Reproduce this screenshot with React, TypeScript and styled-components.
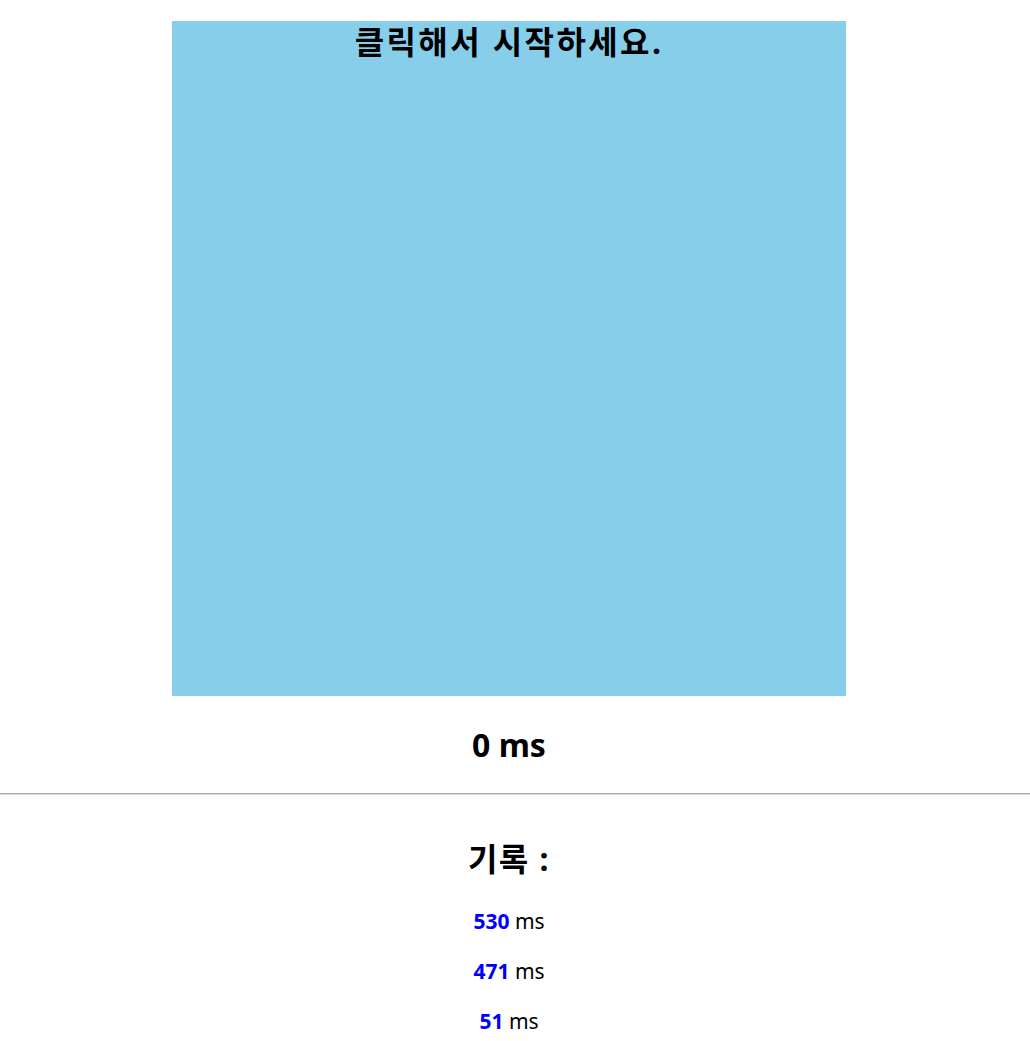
import React from "react";
import styled, { createGlobalStyle } from "styled-components";

const Global = createGlobalStyle`
  html, body { margin: 0; padding: 0; background: #fff; }
  body { font-family: "Noto Sans", "Noto Sans CJK KR", sans-serif; color: #000; }
`;

const Page = styled.div`
  width: 1018px;
  display: flex;
  flex-direction: column;
  align-items: center;
  padding-top: 21px;
`;

const Screen = styled.div`
  width: 674px;
  height: 675px;
  background: #87ceeb;
  text-align: center;
  font-size: 32px;
  font-weight: 700;
  line-height: 42px;
  letter-spacing: 2.4px;
  cursor: pointer;
`;

const Heading = styled.div<{ $top: number; $spacing?: number }>`
  margin-top: ${(p) => p.$top}px;
  font-size: 32px;
  font-weight: 700;
  line-height: 40px;
  letter-spacing: ${(p) => p.$spacing ?? 0}px;
  text-align: center;
`;

const Rule = styled.hr`
  margin: 28px 0 0;
  border: none;
  border-top: 1px solid #aaa;
  border-bottom: 1px solid #ddd;
  height: 0;
`;

const Records = styled.div`
  width: 1018px;
  display: flex;
  flex-direction: column;
  align-items: center;
  padding-top: 44px;
`;

const List = styled.div`
  display: flex;
  flex-direction: column;
  align-items: center;
  gap: 20px;
  margin-top: 27px;
`;

const Item = styled.div`
  font-size: 21px;
  line-height: 30px;
`;

const Num = styled.b`
  color: #0000ff;
`;

const records = [530, 471, 51];

export default function App() {
  return (
    <>
      <Global />
      <Page>
        <Screen>클릭해서 시작하세요.</Screen>
        <Heading $top={29}>0 ms</Heading>
      </Page>
      <Rule />
      <Records>
        <Heading $top={0} $spacing={1.5}>기록 :</Heading>
        <List>
          {records.map((r, i) => (
            <Item key={i}>
              <Num>{r}</Num> ms
            </Item>
          ))}
        </List>
      </Records>
    </>
  );
}
